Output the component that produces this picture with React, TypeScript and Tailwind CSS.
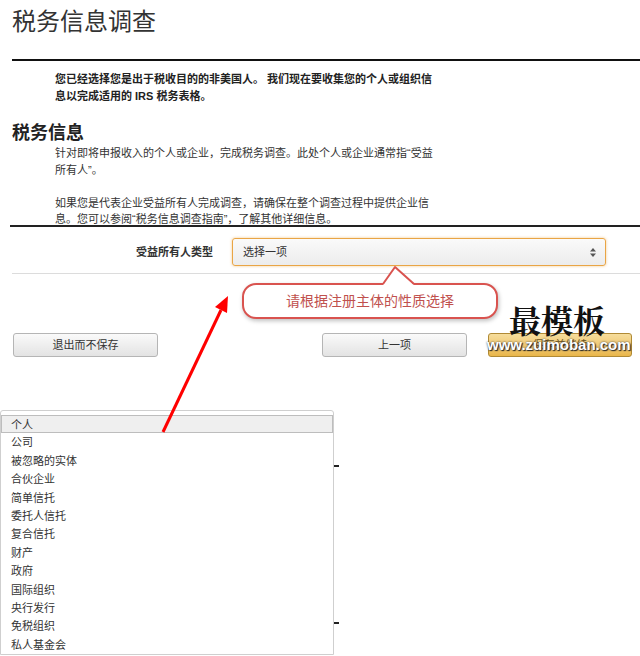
import React from 'react';

const options = [
  '个人',
  '公司',
  '被忽略的实体',
  '合伙企业',
  '简单信托',
  '委托人信托',
  '复合信托',
  '财产',
  '政府',
  '国际组织',
  '央行发行',
  '免税组织',
  '私人基金会',
];

function SelectArrows() {
  return (
    <svg width="6" height="9" viewBox="0 0 6 9" className="text-[#555]">
      <path d="M3 0 L6 3.5 L0 3.5 Z" fill="currentColor" />
      <path d="M3 9 L6 5.5 L0 5.5 Z" fill="currentColor" />
    </svg>
  );
}

export default function App() {
  return (
    <div
      className="relative w-[640px] h-[656px] overflow-hidden bg-white text-[#333]"
      style={{ fontFamily: '"Liberation Sans", "Noto Sans CJK SC", sans-serif' }}
    >
      {/* header */}
      <h1 className="pt-[6px] pl-[12px] text-[24px] leading-[32px] font-normal text-[#333]">税务信息调查</h1>
      <div className="mt-[21px] ml-[12px] h-[2px] bg-[#111]" />

      <p className="mt-[10px] pl-[55px] text-[11px] leading-[17px] font-semibold text-[#222]">
        您已经选择您是出于税收目的的非美国人。 我们现在要收集您的个人或组织信
        <br />
        息以完成适用的 IRS 税务表格。
      </p>

      <h2 className="mt-[16px] pl-[12px] text-[18px] leading-[24px] font-bold text-[#222]">税务信息</h2>
      <p className="pl-[55px] text-[11px] leading-[17px] text-[#333]">
        针对即将申报收入的个人或企业，完成税务调查。此处个人或企业通常指“受益
        <br />
        所有人”。
      </p>
      <p className="mt-[16px] pl-[55px] text-[11px] leading-[16px] text-[#333]">
        如果您是代表企业受益所有人完成调查，请确保在整个调查过程中提供企业信
        <br />
        息。您可以参阅“税务信息调查指南”，了解其他详细信息。
      </p>
      <div className="mt-[-2px] ml-[10px] h-[2px] bg-[#222]" />

      {/* beneficial owner type */}
      <div className="mt-[11px] flex items-center h-[28px]">
        <label className="w-[213px] text-right text-[11px] font-bold text-[#333]">受益所有人类型</label>
        <div className="ml-[19px] w-[374px] h-[28px] flex items-center justify-between pl-[10px] pr-[9px] rounded-[3px] border border-[#e9a545] bg-gradient-to-b from-[#fafafa] to-[#ececec] shadow-[0_0_3px_rgba(233,165,69,0.6)] text-[11px] text-[#333]">
          <span>选择一项</span>
          <SelectArrows />
        </div>
      </div>
      <div className="mt-[7px] ml-[12px] h-px bg-[#dcdcdc]" />

      {/* buttons */}
      <div className="mt-[59px] flex items-center pl-[13px] pr-[8px] h-[24px]">
        <button className="w-[145px] h-[24px] rounded-[3px] border border-[#b5b5b5] bg-gradient-to-b from-[#fafafa] to-[#e3e3e3] text-[11px] text-[#333]">
          退出而不保存
        </button>
        <button className="ml-auto w-[145px] h-[24px] rounded-[3px] border border-[#b5b5b5] bg-gradient-to-b from-[#fafafa] to-[#e3e3e3] text-[11px] text-[#333]">
          上一项
        </button>
        <button className="ml-[21px] w-[144px] h-[24px] rounded-[3px] border border-[#b08a35] bg-gradient-to-b from-[#f6dd9c] to-[#e9b64a] text-[11px] text-[#6b5320]">
          保存并继续
        </button>
      </div>

      {/* dropdown list */}
      <div className="relative mt-[53px] w-[334px] border border-[#cfcfcf] rounded-t-[3px] pt-[4px] bg-white">
        {options.map((o, i) => (
          <div
            key={o}
            className={
              i === 0
                ? 'h-[18.4px] leading-[18px] pl-[9px] text-[11px] text-[#333] bg-[#efefef] border border-[#bdbdbd]'
                : 'h-[18.4px] leading-[18.4px] pl-[10px] text-[11px] text-[#333]'
            }
          >
            {o}
          </div>
        ))}
        <div className="absolute left-[333px] top-[54px] w-[5px] h-[2px] bg-[#222]" />
        <div className="absolute left-[333px] top-[211px] w-[5px] h-[2px] bg-[#222]" />
      </div>

      {/* callout */}
      <div className="absolute left-[242px] top-[283px] w-[256px] h-[36px] rounded-[14px] border-2 border-[#d9534f] bg-white shadow-[1px_2px_4px_rgba(0,0,0,0.25)] flex items-center justify-center text-[14px] text-[#c0504d]">
        请根据注册主体的性质选择
      </div>
      <svg className="absolute left-[378px] top-[264px]" width="40" height="24" viewBox="0 0 40 24">
        <polygon points="5,21 17,3 36,21" fill="#fff" />
        <polyline points="5,20 17,3 36,20" fill="none" stroke="#d9534f" strokeWidth="2" strokeLinejoin="round" />
      </svg>

      {/* red arrow */}
      <svg className="absolute left-0 top-0 pointer-events-none" width="640" height="656" viewBox="0 0 640 656">
        <line x1="163" y1="432" x2="221" y2="310" stroke="#f00" strokeWidth="3" />
        <polygon points="228,296 227,313 215,307" fill="#f00" />
      </svg>

      {/* watermark */}
      <div
        className="absolute left-[509px] top-[299px] text-[32px] leading-[40px] font-bold text-[#111]"
        style={{ fontFamily: '"Noto Serif CJK SC", "Noto Sans CJK SC", serif' }}
      >
        最模板
      </div>
      <div className="absolute left-[487px] top-[336px] text-[15px] leading-[18px] font-bold text-white [text-shadow:0_0_2px_#333,1px_1px_1px_#222]">
        www.zuimoban.com
      </div>
    </div>
  );
}
